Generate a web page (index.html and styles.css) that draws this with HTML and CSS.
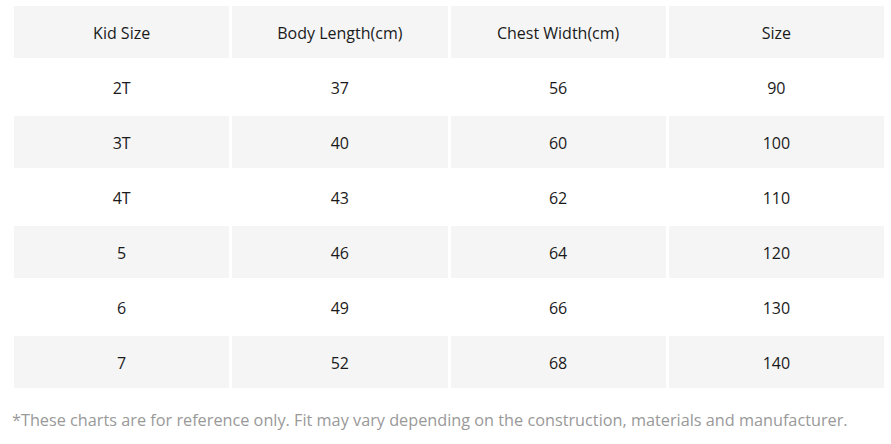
FILE: index.html
```html
<!DOCTYPE html>
<html>
<head>
<meta charset="utf-8">
<link rel="stylesheet" href="styles.css">
</head>
<body>
<div class="wrap">
  <table class="chart">
    <thead>
      <tr><th>Kid Size</th><th>Body Length(cm)</th><th>Chest Width(cm)</th><th>Size</th></tr>
    </thead>
    <tbody>
      <tr><td>2T</td><td>37</td><td>56</td><td>90</td></tr>
      <tr class="alt"><td>3T</td><td>40</td><td>60</td><td>100</td></tr>
      <tr><td>4T</td><td>43</td><td>62</td><td>110</td></tr>
      <tr class="alt"><td>5</td><td>46</td><td>64</td><td>120</td></tr>
      <tr><td>6</td><td>49</td><td>66</td><td>130</td></tr>
      <tr class="alt"><td>7</td><td>52</td><td>68</td><td>140</td></tr>
    </tbody>
  </table>
  <p class="note">*These charts are for reference only. Fit may vary depending on the construction, materials and manufacturer.</p>
</div>
</body>
</html>
```

FILE: styles.css
```css
html, body {
  margin: 0;
  padding: 0;
  background: #fff;
}
body {
  font-family: "Open Sans", "Liberation Sans", sans-serif;
  color: #1a1a1a;
}
.wrap {
  padding: 3px 0 0 11px;
}
.chart {
  width: 876px;
  border-collapse: separate;
  border-spacing: 3px;
  table-layout: fixed;
}
.chart th,
.chart td {
  height: 51px;
  padding: 1px 0 0;
  text-align: center;
  vertical-align: middle;
  font-size: 16px;
  font-weight: 400;
}
.chart th,
.chart .alt td {
  background: #f5f5f5;
}
.note {
  margin: 18px 0 0 1px;
  font-size: 16.25px;
  color: #999;
}
```
